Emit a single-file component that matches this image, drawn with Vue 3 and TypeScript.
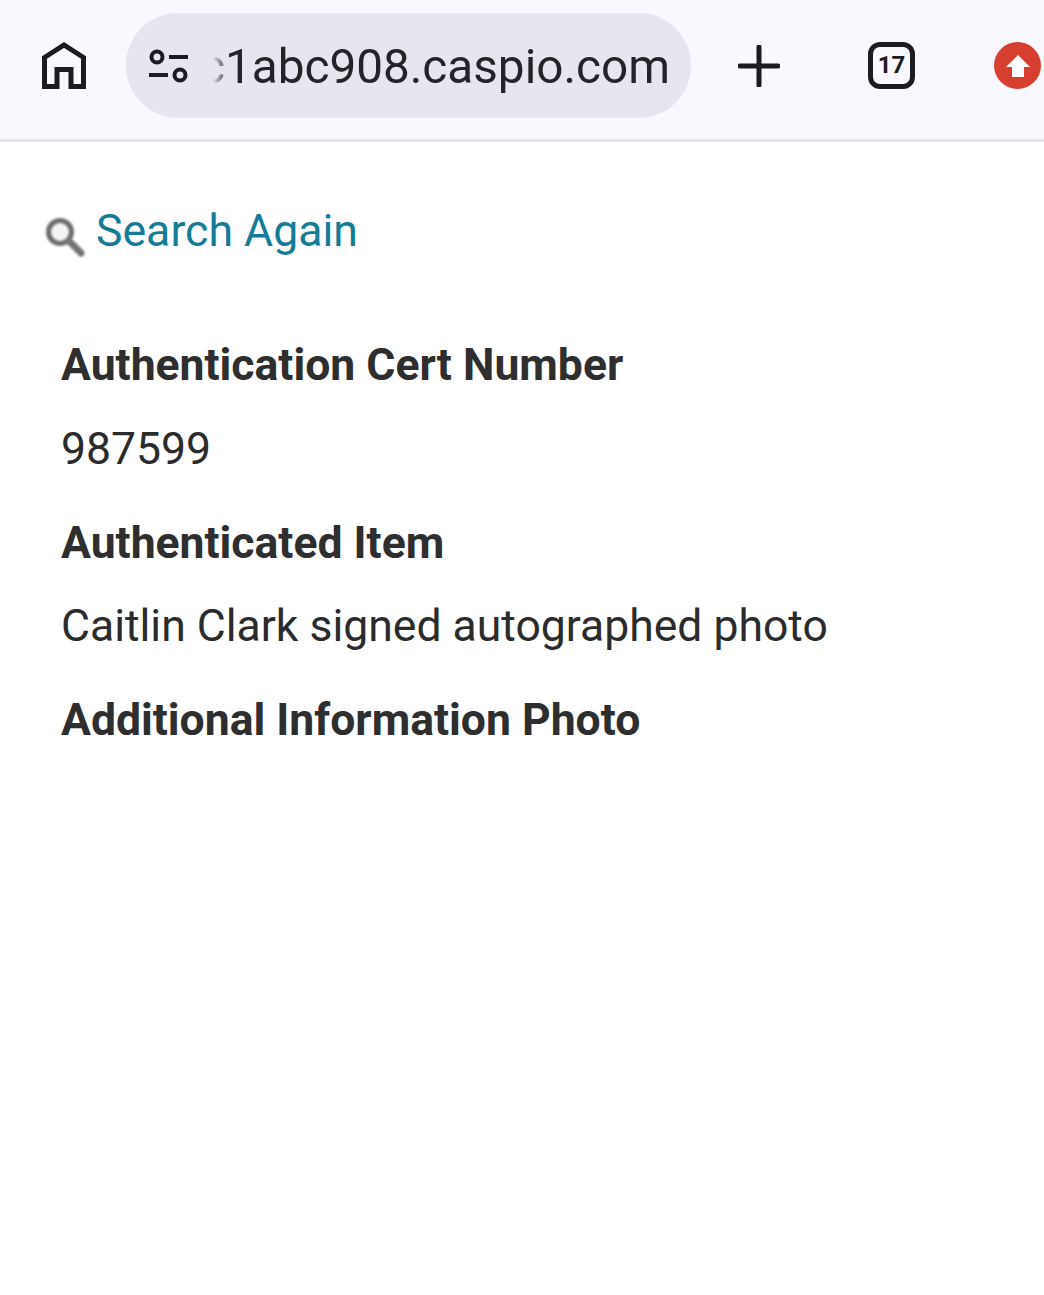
<script setup lang="ts">
interface Field {
  label: string
  value?: string
}

const fields: Field[] = [
  { label: 'Authentication Cert Number', value: '987599' },
  { label: 'Authenticated Item', value: 'Caitlin Clark signed autographed photo' },
  { label: 'Additional Information Photo' }
]
</script>

<template>
  <div class="page">
    <header class="toolbar">
      <svg class="home" viewBox="0 0 44 47" width="44" height="47" aria-hidden="true">
        <path
          d="M2.5 44.5V15.5L22 3l19.5 12.5v29H29V27.5H15v17z"
          fill="none"
          stroke="#1c1c20"
          stroke-width="5"
        />
      </svg>
      <div class="omnibox">
        <svg class="tune" viewBox="0 0 40 34" width="40" height="34" aria-hidden="true">
          <circle cx="8" cy="8" r="5.5" fill="none" stroke="#1c1c20" stroke-width="4" />
          <path d="M20 8h19M0 26h19" stroke="#1c1c20" stroke-width="4" />
          <circle cx="31" cy="26" r="5.5" fill="none" stroke="#1c1c20" stroke-width="4" />
        </svg>
        <div class="url"><span>c1abc908.caspio.com</span></div>
      </div>
      <svg class="plus" viewBox="0 0 42 42" width="42" height="42" aria-hidden="true">
        <path d="M2 21h38M21 2v38" stroke="#1c1c20" stroke-width="5" stroke-linecap="round" />
      </svg>
      <div class="tabs">17</div>
      <div class="update">
        <svg viewBox="0 0 26 24" width="26" height="24" aria-hidden="true">
          <path d="M13 1 25 13h-6v10H7V13H1z" fill="#fff" />
        </svg>
      </div>
    </header>

    <main class="content">
      <a class="search-again" href="#">
        <svg class="lens" viewBox="0 0 42 42" width="42" height="42" aria-hidden="true">
          <circle cx="16" cy="16" r="11.5" fill="#f4f4f4" stroke="#6e6e6e" stroke-width="5" />
          <path d="M25 25l12 12" stroke="#757575" stroke-width="7" stroke-linecap="round" />
        </svg>
        <span>Search Again</span>
      </a>
      <dl class="fields">
        <template v-for="field in fields" :key="field.label">
          <dt>{{ field.label }}</dt>
          <dd v-if="field.value">{{ field.value }}</dd>
        </template>
      </dl>
    </main>
  </div>
</template>

<style scoped>
.page {
  width: 1044px;
  height: 1295px;
  overflow: hidden;
  background: #fff;
  font-family: Roboto, "Liberation Sans", sans-serif;
}
.toolbar {
  box-sizing: border-box;
  display: flex;
  align-items: center;
  height: 142px;
  padding: 0 0 8px 42px;
  background: #f8f8fe;
  border-bottom: 3px solid #e3e3e6;
}
.home {
  flex: none;
  margin-right: 40px;
}
.omnibox {
  flex: none;
  display: flex;
  align-items: center;
  box-sizing: border-box;
  width: 565px;
  height: 105px;
  padding: 0 21px 0 23px;
  border-radius: 52px;
  background: #e6e6ee;
}
.tune {
  flex: none;
}
.url {
  flex: 1;
  display: flex;
  justify-content: flex-end;
  overflow: hidden;
  margin-left: 20px;
  font-size: 47.7px;
  line-height: 60px;
  padding-top: 3px;
  color: #232328;
  white-space: nowrap;
  -webkit-mask-image: linear-gradient(to right, transparent 4px, #000 20px);
  mask-image: linear-gradient(to right, transparent 4px, #000 20px);
}
.plus {
  flex: none;
  margin-left: 47px;
}
.tabs {
  flex: none;
  box-sizing: border-box;
  width: 47px;
  height: 47px;
  margin-left: 88px;
  border: 5px solid #1c1c20;
  border-radius: 12px;
  font-size: 24px;
  font-weight: 700;
  line-height: 37px;
  text-align: center;
  color: #1c1c20;
}
.update {
  flex: none;
  display: flex;
  align-items: center;
  justify-content: center;
  width: 47px;
  height: 47px;
  margin-left: 79px;
  border-radius: 50%;
  background: #d63f30;
}
.content {
  padding: 59px 0 0 45px;
}
.search-again {
  display: flex;
  align-items: center;
  gap: 10px;
  height: 60px;
  font-size: 44.6px;
  color: #147c96;
  text-decoration: none;
}
.lens {
  flex: none;
  margin-top: 12px;
  margin-left: -1px;
  filter: blur(0.8px);
}
.fields {
  margin: 74px 0 0 16px;
  font-size: 44.5px;
  line-height: 60px;
}
dt {
  font-weight: 700;
  color: #2e2e2e;
}
dd {
  margin: 23.5px 0 34px;
  color: #2b2b2b;
}
</style>

<style>
html,
body {
  margin: 0;
  background: #fff;
}
</style>
